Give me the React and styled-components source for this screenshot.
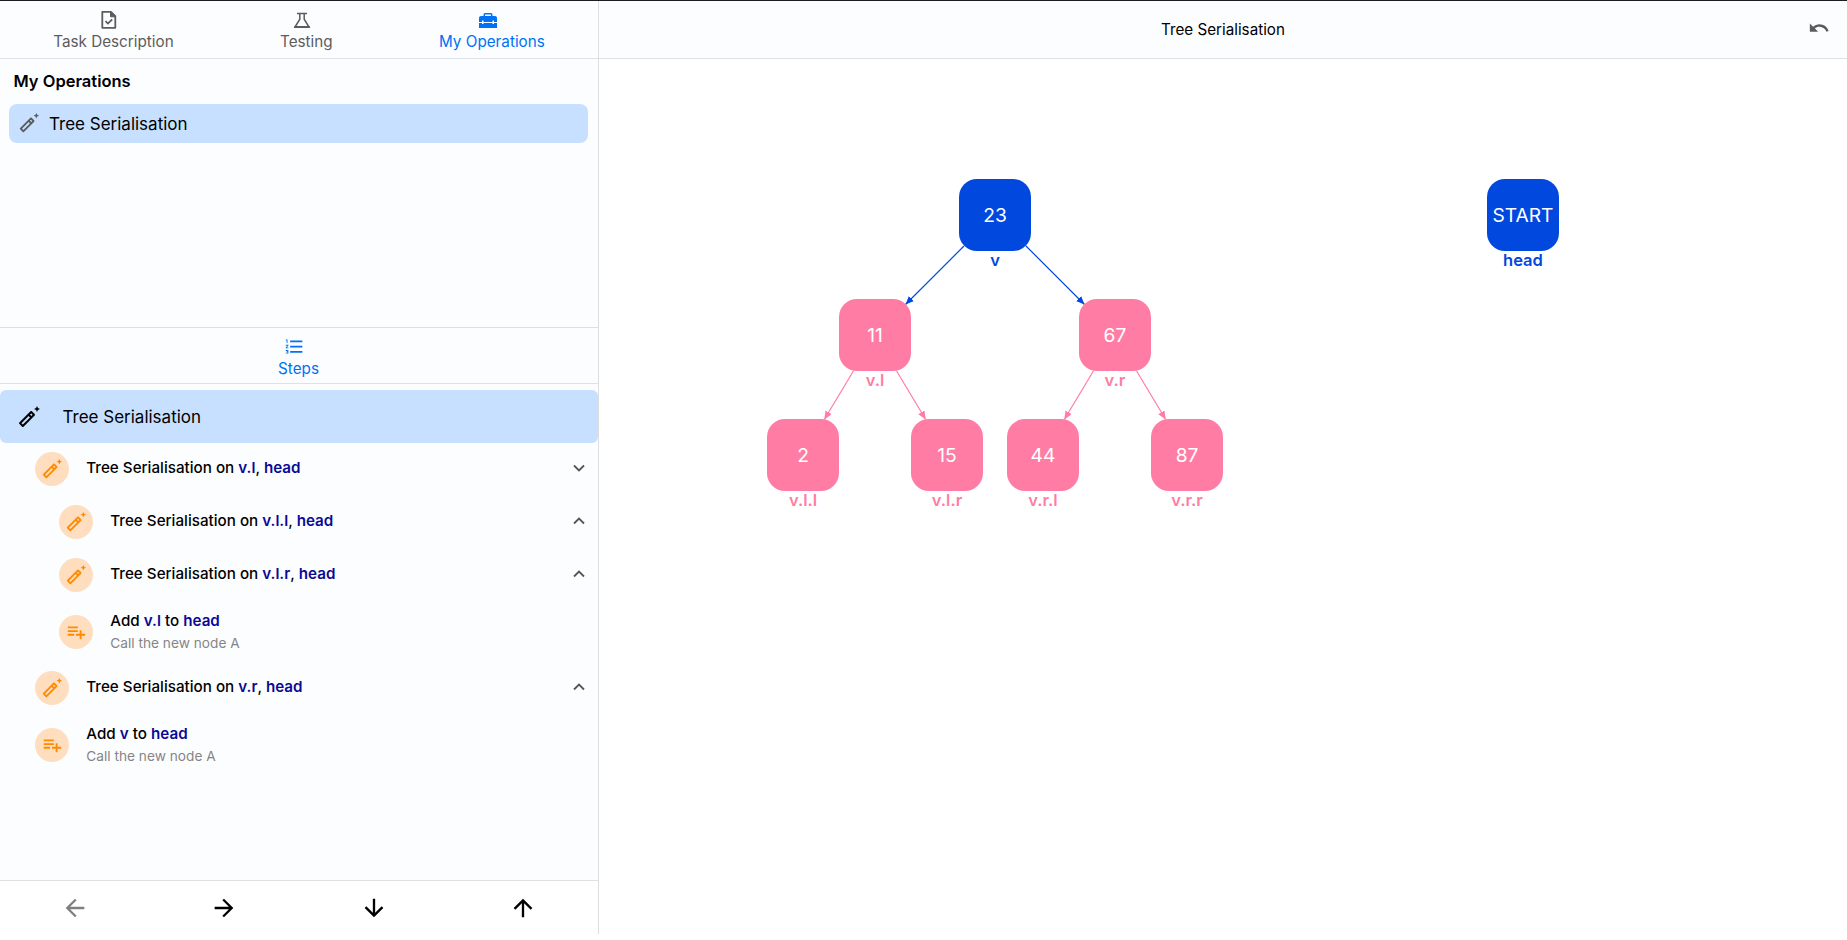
import React from 'react';
import styled, { createGlobalStyle, css } from 'styled-components';
import {
  MdOutlineAutoFixNormal,
  MdPlaylistAdd,
  MdUndo,
  MdFormatListNumbered,
  MdArrowBack,
  MdArrowForward,
  MdArrowDownward,
  MdArrowUpward,
} from 'react-icons/md';

const GlobalStyle = createGlobalStyle`
  * { box-sizing: border-box; }
  body {
    margin: 0;
    background: #fff;
    color: #000;
    font-family: Inter, "Liberation Sans", sans-serif;
    font-size: 16px;
    overflow: hidden;
  }
`;

const Page = styled.div`
  height: 934px;
  display: flex;
  border-top: 1px solid #1c1b22;
`;

const Sidebar = styled.aside`
  width: 599px;
  flex: none;
  display: flex;
  flex-direction: column;
  border-right: 1px solid #dedede;
  background: #fcfdff;
`;

const TabBar = styled.nav`
  height: 58px;
  flex: none;
  display: flex;
  justify-content: space-around;
  border-bottom: 1px solid #dee2e6;
`;

const Tab = styled.div`
  display: flex;
  flex-direction: column;
  align-items: center;
  padding-top: 9px;
  font-size: 15.25px;
  line-height: 24px;
  color: ${p => (p.$active ? '#0071f5' : '#5c5c5c')};
  svg { display: block; margin-right: 8px; flex: none; }
`;

const Operations = styled.section`
  height: 268px;
  flex: none;
  padding: 11px 10px 0 9px;
`;

const Heading = styled.h1`
  margin: 0 0 12px 4.5px;
  font-size: 16.5px;
  line-height: 22px;
  font-weight: 600;
`;

const Operation = styled.div`
  height: 39px;
  display: flex;
  align-items: center;
  gap: 9px;
  padding-left: 9px;
  border-radius: 8px;
  background: #c7e0ff;
  font-size: 17px;
  svg { color: #5c5c5c; margin-top: -2px; }
`;

const StepsBar = styled(TabBar)`
  height: 57px;
  padding-right: 1px;
  border-top: 1px solid #dedede;
  ${Tab} { padding-top: 8px; }
`;

const Steps = styled.section`
  flex: 1;
  padding-top: 6px;
`;

const CurrentStep = styled.div`
  height: 53px;
  display: flex;
  align-items: center;
  gap: 21.5px;
  padding-left: 17px;
  border-radius: 6px;
  background: #c7e0ff;
  font-size: 17px;
`;

const StepRow = styled.div`
  height: ${p => (p.$tall ? 60 : 53)}px;
  display: flex;
  align-items: center;
  padding: 0 12px 0 ${p => 35 + p.$level * 24}px;
`;

const Badge = styled.div`
  width: 34px;
  height: 34px;
  flex: none;
  display: grid;
  place-items: center;
  margin-top: -1px;
  border-radius: 50%;
  background: #ffdec0;
  color: #ff8a00;
`;

const StepText = styled.div`
  flex: 1;
  margin: -3px 0 0 17.3px;
  font-size: 15.2px;
  line-height: 24px;
  font-weight: 500;
  b { color: #0a0a94; font-weight: 600; }
`;

const Note = styled.div`
  font-size: 13.7px;
  line-height: 20px;
  font-weight: 400;
  color: #858585;
`;

const ChevronSvg = styled.svg`
  color: #555;
  margin-top: -3px;
  ${p => p.$up && css`transform: rotate(180deg);`}
`;

const Footer = styled.footer`
  height: 54px;
  display: grid;
  grid-template-columns: repeat(4, 1fr);
  place-items: center;
  border-top: 1px solid #e0e0e0;
  background: #fff;
`;

const Arrow = styled.div`
  display: flex;
  color: ${p => (p.$disabled ? '#808080' : '#000')};
`;

const Main = styled.main`
  flex: 1;
  display: flex;
  flex-direction: column;
`;

const Header = styled.header`
  height: 58px;
  display: grid;
  grid-template-columns: 1fr auto 1fr;
  align-items: center;
  border-bottom: 1px solid #dee2e6;
  background: #fcfdff;
  font-size: 15.2px;
`;

const UndoButton = styled.div`
  justify-self: end;
  display: flex;
  margin: -3px 17px 0 0;
  color: #5c5c5c;
`;

const Canvas = styled.div`
  position: relative;
  flex: 1;
`;

const Edges = styled.svg`
  position: absolute;
  left: 0;
  top: 0;
`;

const Node = styled.div`
  position: absolute;
  left: ${p => p.$x - 36}px;
  top: ${p => p.$y - 36}px;
  width: 72px;
  height: 72px;
  display: grid;
  place-items: center;
  border-radius: 18px;
  background: ${p => p.$color};
  color: #fff;
  font-size: 19.2px;
`;

const NodeLabel = styled.div`
  position: absolute;
  left: 0;
  right: 0;
  top: 71px;
  color: ${p => p.$color};
  font-size: 16.5px;
  line-height: 20px;
  font-weight: 600;
  text-align: center;
`;

const BLUE = '#0048de';
const PINK = '#ff7da4';

const nodes = [
  { x: 396, y: 156, value: '23', label: 'v', color: BLUE },
  { x: 924, y: 156, value: 'START', label: 'head', color: BLUE },
  { x: 276, y: 276, value: '11', label: 'v.l', color: PINK },
  { x: 516, y: 276, value: '67', label: 'v.r', color: PINK },
  { x: 204, y: 396, value: '2', label: 'v.l.l', color: PINK },
  { x: 348, y: 396, value: '15', label: 'v.l.r', color: PINK },
  { x: 444, y: 396, value: '44', label: 'v.r.l', color: PINK },
  { x: 588, y: 396, value: '87', label: 'v.r.r', color: PINK },
];

const edges = [
  [365, 187, 306.5, 245.5, BLUE],
  [427, 187, 485.5, 245.5, BLUE],
  [254.4, 312, 225.3, 360.5, PINK],
  [297.6, 312, 326.7, 360.5, PINK],
  [494.4, 312, 465.3, 360.5, PINK],
  [537.6, 312, 566.7, 360.5, PINK],
];

const steps = [
  { level: 0, text: <>Tree Serialisation on <b>v.l</b>, <b>head</b></>, chevron: 'down' },
  { level: 1, text: <>Tree Serialisation on <b>v.l.l</b>, <b>head</b></>, chevron: 'up' },
  { level: 1, text: <>Tree Serialisation on <b>v.l.r</b>, <b>head</b></>, chevron: 'up' },
  { level: 1, text: <>Add <b>v.l</b> to <b>head</b></>, note: 'Call the new node A' },
  { level: 0, text: <>Tree Serialisation on <b>v.r</b>, <b>head</b></>, chevron: 'up' },
  { level: 0, text: <>Add <b>v</b> to <b>head</b></>, note: 'Call the new node A' },
];

const FileCheckIcon = () => (
  <svg width="20" height="20" viewBox="0 0 20 20" fill="none" stroke="currentColor" strokeWidth="1.8">
    <path d="M12 1.800H3.300v16h13V6.200z" strokeLinejoin="round" />
    <path d="M11.500 1.800v5h5z" fill="currentColor" strokeWidth="1" />
    <path d="M6.500 11.200l2.400 2.400 4.300-4.300" />
  </svg>
);

const FlaskIcon = () => (
  <svg width="20" height="20" viewBox="0 0 20 20" fill="none" stroke="currentColor" strokeWidth="1.5">
    <path d="M5 3.600h10M7.800 3.600v5.600L3 17h14L12.200 9.200V3.600" />
    <path d="M2.200 17h15.600" strokeWidth="2" />
  </svg>
);

const ToolboxIcon = () => (
  <svg width="20" height="20" viewBox="0 0 20 20" fill="currentColor">
    <path fillRule="evenodd" d="M5.500 6V4.500Q5.500 3 7 3h6q1.500 0 1.500 1.500V6H17q2 0 2 2v4h-3v-1.500h-1.500V12h-9v-1.500H4V12H1V8q0-2 2-2zM7 6h6V4.500H7zM1 13h3v1h1.500v-1h9v1H16v-1h3v5H1z" />
  </svg>
);

const Chevron = ({ up }) => (
  <ChevronSvg width="14" height="14" viewBox="0 0 14 14" fill="none" stroke="currentColor" strokeWidth="1.800" $up={up}>
    <path d="M2 4.500l5 5 5-5" />
  </ChevronSvg>
);

export default function App() {
  return (
    <>
      <GlobalStyle />
      <Page>
        <Sidebar>
          <TabBar>
            <Tab><FileCheckIcon />Task Description</Tab>
            <Tab><FlaskIcon />Testing</Tab>
            <Tab $active><ToolboxIcon />My Operations</Tab>
          </TabBar>
          <Operations>
            <Heading>My Operations</Heading>
            <Operation><MdOutlineAutoFixNormal size={22} />Tree Serialisation</Operation>
          </Operations>
          <StepsBar>
            <Tab $active><MdFormatListNumbered size={21} />Steps</Tab>
          </StepsBar>
          <Steps>
            <CurrentStep><MdOutlineAutoFixNormal size={24} />Tree Serialisation</CurrentStep>
            {steps.map((s, i) => (
              <StepRow key={i} $level={s.level} $tall={!!s.note}>
                <Badge>{s.note ? <MdPlaylistAdd size={22} /> : <MdOutlineAutoFixNormal size={22} />}</Badge>
                <StepText>{s.text}{s.note && <Note>{s.note}</Note>}</StepText>
                {s.chevron && <Chevron up={s.chevron === 'up'} />}
              </StepRow>
            ))}
          </Steps>
          <Footer>
            <Arrow $disabled><MdArrowBack size={28} /></Arrow>
            <Arrow><MdArrowForward size={28} /></Arrow>
            <Arrow><MdArrowDownward size={28} /></Arrow>
            <Arrow><MdArrowUpward size={28} /></Arrow>
          </Footer>
        </Sidebar>
        <Main>
          <Header>
            <span />
            <span>Tree Serialisation</span>
            <UndoButton><MdUndo size={22} /></UndoButton>
          </Header>
          <Canvas>
            <Edges width="1248" height="875">
              <defs>
                {[['blue', BLUE], ['pink', PINK]].map(([id, color]) => (
                  <marker key={id} id={id} viewBox="0 0 7 6" refX="7" refY="3" markerWidth="7" markerHeight="6" orient="auto">
                    <path d="M0 0L7 3L0 6z" fill={color} />
                  </marker>
                ))}
              </defs>
              {edges.map(([x1, y1, x2, y2, color], i) => (
                <line key={i} x1={x1} y1={y1} x2={x2} y2={y2} stroke={color} strokeWidth="1.2"
                  markerEnd={`url(#${color === BLUE ? 'blue' : 'pink'})`} />
              ))}
            </Edges>
            {nodes.map(n => (
              <Node key={n.label} $x={n.x} $y={n.y} $color={n.color}>
                {n.value}
                <NodeLabel $color={n.color}>{n.label}</NodeLabel>
              </Node>
            ))}
          </Canvas>
        </Main>
      </Page>
    </>
  );
}
